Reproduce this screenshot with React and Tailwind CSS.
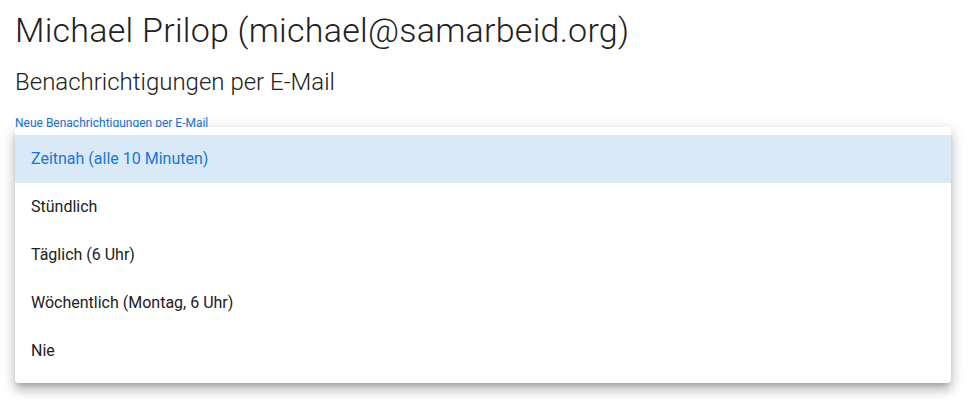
import React from 'react';

const OPTIONS = [
  'Zeitnah (alle 10 Minuten)',
  'Stündlich',
  'Täglich (6 Uhr)',
  'Wöchentlich (Montag, 6 Uhr)',
  'Nie',
];

export default function App() {
  return (
    <div className="min-h-[411px] bg-white pl-[15px] pt-[10px] text-[#212121]" style={{ fontFamily: 'Roboto, "Noto Sans", sans-serif' }}>
      <h1 className="text-[34px] leading-[40px] font-light tracking-[0.25px]">
        Michael Prilop (michael@samarbeid.org)
      </h1>
      <h2 className="mt-[16px] text-[24px] leading-[32px] font-light">
        Benachrichtigungen per E-Mail
      </h2>

      {/* Select field with open menu */}
      <div className="relative mt-[17px] w-[936px]">
        <label className="block text-[12px] leading-[16px] text-[#1976d2]">
          Neue Benachrichtigungen per E-Mail
        </label>
        <div className="h-[30px] border-b-2 border-[#1976d2]" />

        <div className="absolute left-0 top-[12px] z-10 w-[936px] rounded-[4px] bg-white py-2 shadow-[0_5px_5px_-3px_rgba(0,0,0,0.2),0_8px_10px_1px_rgba(0,0,0,0.14),0_3px_14px_2px_rgba(0,0,0,0.12)]">
          {OPTIONS.map((opt, i) => (
            <div
              key={opt}
              className={
                i === 0
                  ? 'flex h-12 items-center bg-[#dae9f8] px-4 text-[16px] text-[#1976d2]'
                  : 'flex h-12 items-center px-4 text-[16px] text-[#212121]'
              }
            >
              {opt}
            </div>
          ))}
        </div>
      </div>
    </div>
  );
}
